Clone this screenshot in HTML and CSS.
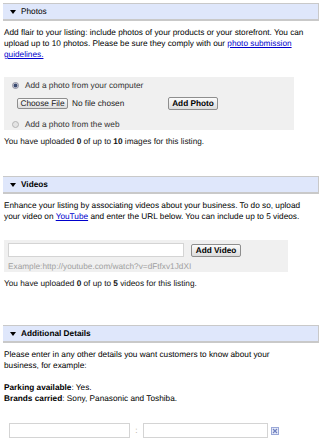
FILE: index.html
```html
<!DOCTYPE html>
<html>
<head>
<meta charset="utf-8">
<link rel="stylesheet" href="styles.css">
</head>
<body>
<div class="section-header"><svg class="tri" width="6" height="4" viewBox="0 0 6 4"><path d="M0 0h6L3 4z"/></svg><span class="title-light">Photos</span></div>
<p class="intro">Add flair to your listing: include photos of your products or your storefront. You can upload up to 10 photos. Please be sure they comply with our <a href="#">photo submission guidelines.</a></p>
<div class="panel photo-panel">
  <div class="radio-row"><span class="radio checked"></span>Add a photo from your computer</div>
  <div class="file-row">
    <span class="btn file-btn">Choose File</span><span class="no-file">No file chosen</span>
    <span class="btn bold add-photo">Add Photo</span>
  </div>
  <div class="radio-row last"><span class="radio"></span>Add a photo from the web</div>
</div>
<p class="count">You have uploaded <b>0</b> of up to <b>10</b> images for this listing.</p>

<div class="section-header videos"><svg class="tri" width="6" height="4" viewBox="0 0 6 4"><path d="M0 0h6L3 4z"/></svg><span class="title">Videos</span></div>
<p class="intro">Enhance your listing by associating videos about your business. To do so, upload your video on <a href="#">YouTube</a> and enter the URL below. You can include up to 5 videos.</p>
<div class="panel video-panel">
  <div class="video-row"><span class="text-input url-input"></span><span class="btn bold add-video">Add Video</span></div>
  <div class="example">Example:http://youtube.com/watch?v=dFtfxv1JdXI</div>
</div>
<p class="count">You have uploaded <b>0</b> of up to <b>5</b> videos for this listing.</p>

<div class="section-header details"><svg class="tri" width="6" height="4" viewBox="0 0 6 4"><path d="M0 0h6L3 4z"/></svg><span class="title">Additional Details</span></div>
<p class="intro narrow">Please enter in any other details you want customers to know about your business, for example:</p>
<p class="examples"><b>Parking available</b>: Yes.<br><b>Brands carried</b>: Sony, Panasonic and Toshiba.</p>
<div class="detail-row">
  <span class="text-input key-input"></span><span class="colon">:</span><span class="text-input value-input"></span>
  <svg class="remove" width="8" height="8" viewBox="0 0 8 8"><rect x="0.5" y="0.5" width="7" height="7" fill="#e8ecf8" stroke="#9aa8d8"/><path d="M2 2l4 4M6 2l-4 4" stroke="#6f80c0" stroke-width="1.2"/></svg>
</div>
</body>
</html>
```
FILE: styles.css
```css
html, body {
  margin: 0;
  background: #fff;
}
body {
  padding: 3px 3px 0 3px;
  font-family: "Liberation Sans", Arial, sans-serif;
  font-size: 8.25px;
  line-height: 11px;
  color: #000;
  text-rendering: geometricPrecision;
}
.section-header {
  height: 15px;
  background: #dfe7fb;
  border-top: 1px solid #c9c9c9;
  border-right: 1px solid #c9c9c9;
  border-bottom: 2px solid #c9c9c9;
  display: flex;
  align-items: center;
  padding-left: 7px;
}
.tri {
  display: block;
  margin-right: 5px;
}
.title {
  font-weight: bold;
}
.intro {
  margin: 6px 0 0 1px;
  max-width: 310px;
}
.intro.narrow {
  max-width: 276px;
}
a {
  color: #0000cc;
  text-decoration: underline;
}
.panel {
  background: #f0f0f0;
  margin-left: 1px;
}
.photo-panel {
  margin-top: 17px;
  width: 290px;
  height: 53px;
  box-sizing: border-box;
  padding: 3px 0 0 7px;
}
.radio-row {
  display: flex;
  align-items: center;
  height: 11px;
  color: #333;
}
.radio-row.last {
  margin-top: 10px;
}
.radio {
  width: 5px;
  height: 5px;
  border-radius: 50%;
  border: 1px solid #b4b4b4;
  background: #e4e4e4;
  margin-right: 6px;
  margin-left: 1px;
  box-sizing: content-box;
}
.radio.checked {
  border-color: #8c8c9c;
  background: radial-gradient(circle, #3a4a70 0 1.6px, #c8ccd8 2.2px);
}
.file-row {
  display: flex;
  align-items: center;
  margin-top: 6px;
  height: 12px;
}
.btn {
  display: flex;
  align-items: center;
  justify-content: center;
  box-sizing: border-box;
  border: 1px solid #8e8e8e;
  border-radius: 2px;
  background: linear-gradient(#fbfbfb, #dcdcdc);
  color: #000;
  white-space: nowrap;
}
.bold {
  font-weight: bold;
}
.file-btn {
  margin-left: 6px;
  width: 51px;
  height: 11px;
  color: #222;
}
.no-file {
  margin-left: 4px;
  color: #222;
}
.add-photo {
  margin-left: auto;
  margin-right: 76px;
  width: 50px;
  height: 13px;
}
.count {
  margin: 6px 0 0 1px;
  color: #111;
}
.videos {
  margin-top: 29px;
}
.video-panel {
  margin-top: 18px;
  width: 284px;
  height: 32px;
  box-sizing: border-box;
  padding: 3px 0 0 4px;
}
.video-row {
  display: flex;
  align-items: center;
  height: 14px;
}
.text-input {
  display: block;
  box-sizing: border-box;
  background: #fff;
  border: 1px solid #d4d4d4;
}
.url-input {
  width: 176px;
  height: 14px;
}
.add-video {
  margin-left: 7px;
  width: 50px;
  height: 13px;
}
.example {
  margin-top: 4px;
  color: #a0a0a0;
}
.details {
  margin-top: 36px;
}
.examples {
  margin: 11px 0 0 1px;
}
.detail-row {
  display: flex;
  align-items: center;
  margin: 19px 0 0 6px;
  height: 15px;
}
.key-input {
  width: 121px;
  height: 15px;
}
.colon {
  width: 13px;
  text-align: center;
  color: #a09a80;
}
.value-input {
  width: 125px;
  height: 15px;
}
.remove {
  display: block;
  margin-left: 3px;
}
```
